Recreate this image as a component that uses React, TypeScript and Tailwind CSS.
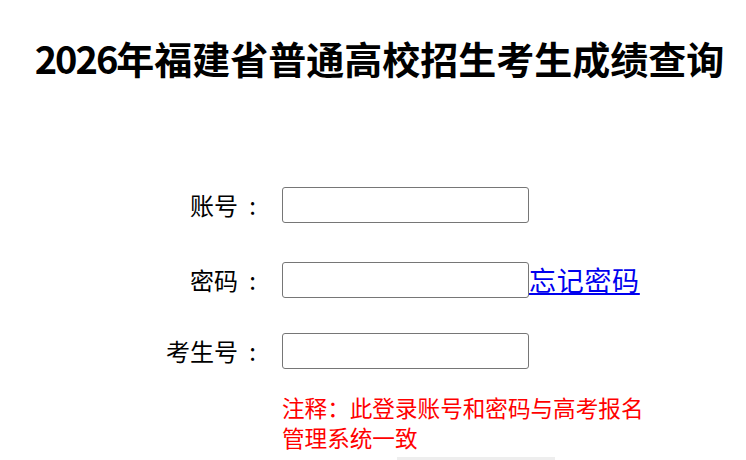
const cjk = { fontFamily: '"Noto Sans CJK SC", "Noto Sans", sans-serif' };

function Field({ label, children }: { label: string; children?: React.ReactNode }) {
  return (
    <div className="flex items-center">
      <label className="flex w-[112px] shrink-0 justify-end text-[24px] leading-[36px] text-black">
        <span>{label}</span>
        <span className="w-[24px] pl-[5px] text-center">:</span>
      </label>
      <input
        type="text"
        className="ml-[20px] h-[36px] w-[247px] rounded-[3px] border border-[#767676] bg-white"
      />
      {children}
    </div>
  );
}

export default function App() {
  return (
    <div className="min-h-screen bg-white" style={cjk}>
      <h1 className="pt-[31px] pl-[13px] text-center text-[38px] font-bold leading-[54px] text-black">
        <span className="tracking-[-2px]">2026</span>年福建省普通高校招生考生成绩查询
      </h1>

      <div className="mt-[102px] pl-[150px]">
        <Field label="账号" />
        <div className="mt-[39px]">
          <Field label="密码">
            <a
              href="#"
              className="self-end pb-[2px] text-[27px] leading-[32px] tracking-[0.7px] text-[#0000ee] underline"
            >
              忘记密码
            </a>
          </Field>
        </div>
        <div className="mt-[35px]">
          <Field label="考生号" />
        </div>

        <p className="mt-[24px] ml-[132px] w-[366px] text-[22.6px] leading-[30px] text-[#ff0000]">
          注释：此登录账号和密码与高考报名管理系统一致
        </p>

        <div className="mt-[4px] ml-[247px] h-[40px] w-[158px] bg-[#eeeeee]" />
      </div>
    </div>
  );
}
